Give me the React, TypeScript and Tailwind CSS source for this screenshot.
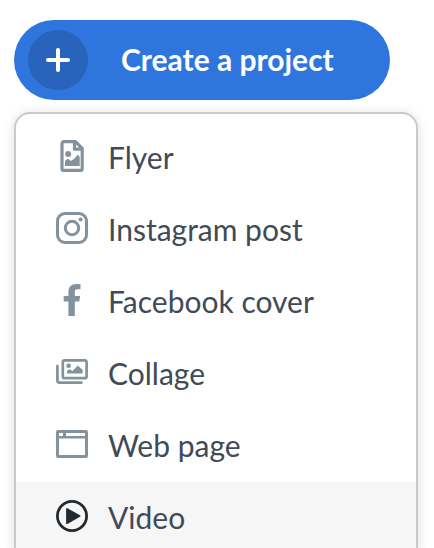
import type { ReactNode } from "react";
import clsx from "clsx";

interface ProjectType {
  label: string;
  icon: ReactNode;
  active?: boolean;
}

const projectTypes: ProjectType[] = [
  {
    label: "Flyer",
    icon: (
      <>
        <path
          d="M19.5 1.6H8a2 2 0 0 0-2 2v24.8a2 2 0 0 0 2 2h16.2a2 2 0 0 0 2-2V8.3zM18.5 1.6v7.6h7.6"
          fill="none"
          stroke="currentColor"
          strokeWidth={3.2}
          strokeLinejoin="round"
        />
        <circle cx={12.2} cy={14} r={3} />
        <path d="M9 26v-5l3-2.5 2.6 2.5 3.4-2 4-4.5 1.7 2.5V26z" />
      </>
    ),
  },
  {
    label: "Instagram post",
    icon: (
      <>
        <g fill="none" stroke="currentColor" strokeWidth={3}>
          <rect x={1.5} y={1.5} width={29} height={29} rx={7.5} />
          <circle cx={16} cy={16} r={6.7} />
        </g>
        <circle cx={24.6} cy={7.5} r={2} />
      </>
    ),
  },
  {
    label: "Facebook cover",
    icon: (
      <path d="M12.4 32V17.5H7.7V12h4.700V8.200C12.400 2.800 15.400 0 20.500 0c1.700 0 3.200.1 4 .3v5h-3.200c-2 0-2.500 1.100-2.500 2.800V12h5.300l-.8 5.500h-4.500V32z" />
    ),
  },
  {
    label: "Collage",
    icon: (
      <>
        <g fill="none" stroke="currentColor" strokeWidth={2.7}>
          <rect x={6.8} y={4.4} width={23.8} height={17.8} rx={2} />
          <path
            d="M1.4 10v14.600a2 2 0 0 0 2 2h22"
            strokeLinecap="round"
          />
        </g>
        <circle cx={12.6} cy={9.8} r={2.3} />
        <path d="M11 17.600v-2.800l2.500-1.500 3 1.700 5.300-5.500 4.900 4.600v3.500z" />
      </>
    ),
  },
  {
    label: "Web page",
    icon: (
      <path
        d="M2.300 2h27.400A2.300 2.300 0 0 1 32 4.300v23.400a2.300 2.300 0 0 1-2.300 2.300H2.300A2.300 2.300 0 0 1 0 27.700V4.300A2.300 2.300 0 0 1 2.300 2zM3 5v3h4V5zM10 5v3h19V5zM3 10.600V27h26V10.600z"
        fillRule="evenodd"
      />
    ),
  },
  {
    label: "Video",
    active: true,
    icon: (
      <>
        <circle
          cx={16}
          cy={16}
          r={14.6}
          fill="none"
          stroke="currentColor"
          strokeWidth={2.8}
        />
        <path
          d="M11 9v14.200L23.500 16z"
          stroke="currentColor"
          strokeWidth={1.8}
          strokeLinejoin="round"
        />
      </>
    ),
  },
];

const MenuItem = ({ label, icon, active }: ProjectType) => (
  <li>
    <button
      type="button"
      className={clsx(
        "flex h-18 w-full items-center gap-5 pb-1 pl-10 text-left text-[30px] leading-10 text-[#414a57] hover:bg-[#f6f6f6]",
        active && "bg-[#f6f6f6]"
      )}
    >
      <svg
        viewBox="0 0 32 32"
        fill="currentColor"
        aria-hidden="true"
        className={clsx(
          "size-8 shrink-0",
          active ? "text-[#232b31]" : "text-[#83929d]"
        )}
      >
        {icon}
      </svg>
      <span className="pt-0.5">{label}</span>
    </button>
  </li>
);

export default function App() {
  return (
    <main className="h-screen overflow-hidden bg-white pt-5 pr-4 pl-3.5 font-['Lato',sans-serif]">
      <div className="flex pr-7">
        <button
          type="button"
          className="flex h-20 grow items-center rounded-full bg-[#2e75de] pl-3.5 text-[30px] leading-10 font-bold text-white"
        >
          <span className="flex size-15 items-center justify-center rounded-full bg-[#2864bc]">
            <svg
              viewBox="0 0 24 24"
              fill="none"
              stroke="currentColor"
              strokeWidth={4}
              strokeLinecap="round"
              aria-hidden="true"
              className="size-6"
            >
              <path d="M12 2v20M2 12h20" />
            </svg>
          </span>
          <span className="ml-[33px] pb-0.5">Create a project</span>
        </button>
      </div>
      <ul className="mt-3 rounded-2xl border-2 border-[#cacaca] bg-white py-2 shadow-[0_2px_12px_rgba(0,0,0,0.14)]">
        {projectTypes.map((type) => (
          <MenuItem key={type.label} {...type} />
        ))}
      </ul>
    </main>
  );
}
